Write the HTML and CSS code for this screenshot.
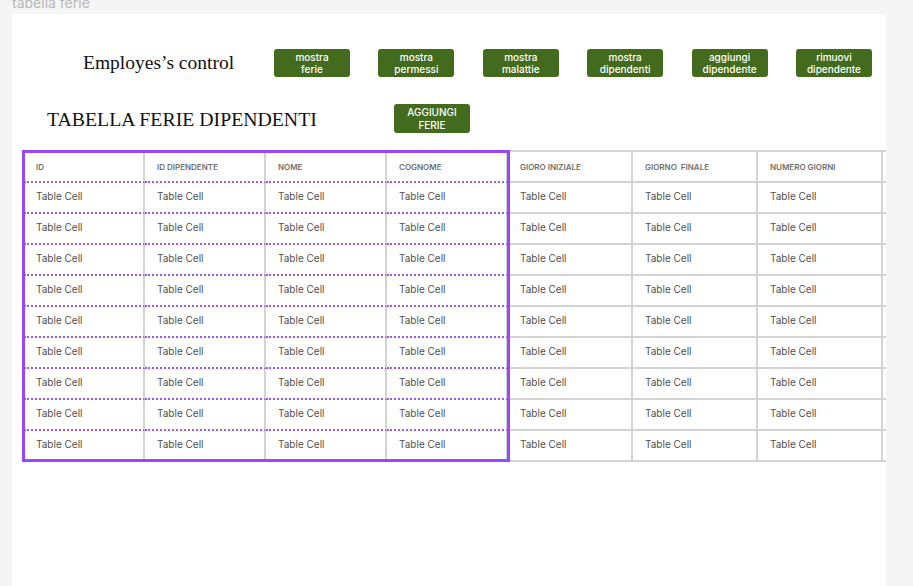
FILE: index.html
```html
<!DOCTYPE html>
<html lang="it">
<head>
<meta charset="utf-8">
<title>tabella ferie</title>
<link rel="stylesheet" href="styles.css">
</head>
<body>
<div class="canvas">
  <div class="frame-label">tabella ferie</div>
  <div class="frame">
    <div class="top-row">
      <h1 class="brand">Employes’s control</h1>
      <nav class="nav">
        <button class="btn">mostra<br>ferie</button>
        <button class="btn">mostra<br>permessi</button>
        <button class="btn">mostra<br>malattie</button>
        <button class="btn">mostra<br>dipendenti</button>
        <button class="btn">aggiungi<br>dipendente</button>
        <button class="btn">rimuovi<br>dipendente</button>
      </nav>
    </div>
    <div class="section-row">
      <h2 class="section-title">TABELLA FERIE DIPENDENTI</h2>
      <button class="btn btn-upper">AGGIUNGI<br>FERIE</button>
    </div>
    <div class="table-wrap">
      <div class="grid" id="grid"></div>
      <div class="selection"></div>
    </div>
  </div>
</div>
<script>
  (function () {
    var heads = ["ID", "ID DIPENDENTE", "NOME", "COGNOME", "GIORO INIZIALE", "GIORNO&nbsp; FINALE", "NUMERO GIORNI", ""];
    var grid = document.getElementById("grid");
    var html = "";
    for (var c = 0; c < heads.length; c++) {
      html += '<div class="cell head' + (c < 4 ? ' s' : '') + '">' + heads[c] + '</div>';
    }
    for (var r = 0; r < 9; r++) {
      for (var c2 = 0; c2 < heads.length; c2++) {
        html += '<div class="cell' + (c2 < 4 ? ' s' : '') + '">' + (c2 < 7 ? 'Table Cell' : '') + '</div>';
      }
    }
    grid.innerHTML = html;
  })();
</script>
</body>
</html>
```
FILE: styles.css
```css
* { box-sizing: border-box; }
html, body { margin: 0; padding: 0; }
body {
  background: #f5f5f5;
  font-family: "Inter", "Liberation Sans", sans-serif;
  width: 913px;
  height: 586px;
  overflow: hidden;
}
.canvas { padding-left: 12px; }
.frame-label {
  font-size: 14px;
  line-height: 14px;
  height: 14px;
  margin-top: -4px;
  color: #b8b8b8;
}
.frame {
  margin-top: 4px;
  width: 874px;
  height: 600px;
  background: #ffffff;
  overflow: hidden;
}
.top-row {
  display: flex;
  align-items: center;
  padding: 35px 0 0 71px;
  height: 63px;
}
.brand {
  margin: 0;
  width: 191px;
  flex: none;
  font-family: "Liberation Serif", "DejaVu Serif", serif;
  font-weight: 400;
  font-size: 19.5px;
  line-height: 28px;
  color: #111;
}
.nav { display: flex; gap: 28.4px; }
.btn {
  width: 76px;
  height: 28px;
  flex: none;
  border: 0;
  border-radius: 3px;
  background: #436b1e;
  color: #fff;
  font-family: "Inter", "Liberation Sans", sans-serif;
  font-size: 10px;
  font-weight: 500;
  line-height: 12.5px;
  padding: 0;
  text-align: center;
}
.btn-upper { height: 29px; }
.section-row {
  display: flex;
  align-items: center;
  margin-top: 27px;
  padding-left: 35px;
  height: 29px;
}
.section-title {
  margin: 0;
  width: 347px;
  flex: none;
  font-family: "Liberation Serif", "DejaVu Serif", serif;
  font-weight: 400;
  font-size: 19.8px;
  line-height: 28px;
  color: #111;
}
.table-wrap {
  position: relative;
  margin-top: 17px;
  margin-left: 10px;
  width: 900px;
}
.grid {
  display: grid;
  grid-template-columns: repeat(4, 121px) repeat(3, 125px) 40px;
  grid-auto-rows: 31px;
  border-top: 2px solid #d3d3d3;
  border-left: 2px solid #d3d3d3;
}
.cell {
  border-right: 2px solid #d3d3d3;
  border-bottom: 2px solid #d3d3d3;
  padding-left: 12px;
  padding-bottom: 3px;
  display: flex;
  align-items: center;
  font-size: 10px;
  color: #505050;
  white-space: nowrap;
}
.cell.head {
  padding-bottom: 0;
  font-size: 8px;
  font-weight: 600;
  color: #707070;
}
.cell.s { border-bottom: 2px dotted #9d55f5; }
.selection {
  position: absolute;
  left: 0;
  top: 0;
  width: 488px;
  height: 312px;
  border: 3px solid #9747ff;
  pointer-events: none;
}
```
